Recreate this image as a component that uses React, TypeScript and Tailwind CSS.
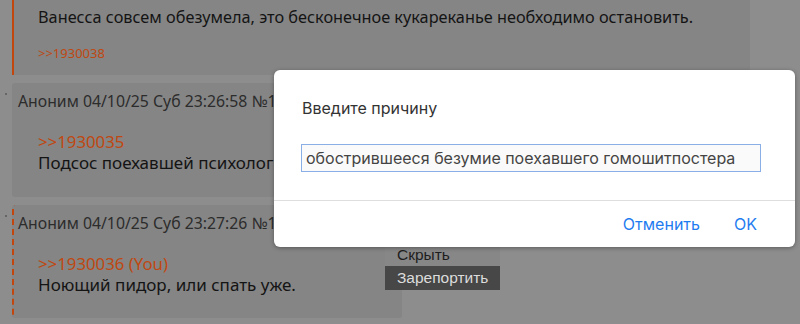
import React from 'react';

const Post: React.FC<{
  header: string;
  link: string;
  body: string;
  dashed?: boolean;
  className?: string;
}> = ({ header, link, body, dashed, className }) => {
  return (
    <div className="flex">
      <div className="w-[12px] pt-[10px] flex justify-center gap-[3px]">
        <span className="w-[2px] h-[2px] bg-[#5a5a5a] rounded-full" />
      </div>
      <div
        className={`bg-[#858585] rounded-[3px] border-l-2 pl-[4px] pb-[14px] overflow-hidden ${
          dashed ? 'border-dashed border-[#c2470f]' : 'border-transparent'
        } ${className ?? ''}`}
      >
        <div className="text-[15.8px] leading-[20px] text-[#2c2c2c] pt-[8px] whitespace-nowrap">
          {header}
        </div>
        <div className="pl-[20px] pt-[20px]">
          <div className="text-[16.8px] leading-[21px] text-[#bf4812]">{link}</div>
          <div className="text-[17px] leading-[22px] text-[#141414] whitespace-nowrap">{body}</div>
        </div>
      </div>
    </div>
  );
};

export default function App() {
  return (
    <div
      className="relative w-[800px] h-[324px] overflow-hidden bg-[#8d8d8d]"
      style={{ fontFamily: '"Noto Sans", "DejaVu Sans", sans-serif' }}
    >
      <div className="flex flex-col gap-[8px]">
        {/* reply being reported */}
        <div className="ml-[12px] w-[738px] h-[75px] bg-[#858585] border-l-2 border-[#c2470f] pl-[24px] pt-[5px]">
          <div className="text-[16.3px] leading-[24px] text-[#141414] whitespace-nowrap">
            Ванесса совсем обезумела, это бесконечное кукареканье необходимо остановить.
          </div>
          <div className="text-[13px] leading-[18px] text-[#bf4812] mt-[15px]">&gt;&gt;1930038</div>
        </div>

        <Post
          header="Аноним 04/10/25 Суб 23:26:58 №1930036"
          link=">>1930035"
          body="Подсос поехавшей психологической помощи."
          className="w-[390px] h-[114px]"
        />

        <Post
          header="Аноним 04/10/25 Суб 23:27:26 №1930039"
          link=">>1930036 (You)"
          body="Ноющий пидор, или спать уже."
          dashed
          className="w-[390px] h-[113px]"
        />
      </div>

      {/* post menu */}
      <div
        className="absolute left-[385px] top-[200px] w-[115px] bg-[#878787] text-[15.5px]"
        style={{ fontFamily: '"Liberation Sans", Arial, sans-serif' }}
      >
        <div className="h-[21px] leading-[21px] pl-[12px] text-[#1e1e1e]">Пожаловаться</div>
        <div className="h-[22px] leading-[22px] pl-[12px] text-[#1e1e1e]">Ответить</div>
        <div className="h-[23px] leading-[23px] pl-[12px] text-[#1e1e1e]">Скрыть</div>
        <div className="h-[24px] leading-[24px] pl-[12px] bg-[#474747] text-[#dcdcdc]">Зарепортить</div>
      </div>

      {/* prompt dialog */}
      <div
        className="absolute left-[274px] top-[70px] w-[521px] h-[177px] bg-white rounded-[6px] shadow-[0_1px_4px_rgba(0,0,0,0.35)] flex flex-col"
        style={{ fontFamily: 'Inter, "Liberation Sans", sans-serif' }}
      >
        <div className="px-[28px] pt-[28px] flex flex-col gap-[26px]">
          <div className="text-[16px] leading-[20px] text-[#333]">Введите причину</div>
          <div className="ml-[-1px] w-[460px] h-[28px] border border-[#8aaee6] bg-[#fafafa] pl-[4px] flex items-center text-[16px] text-[#444] whitespace-nowrap overflow-hidden">
            обострившееся безумие поехавшего гомошитпостера
          </div>
        </div>
        <div className="mt-auto border-t border-[#dedede] h-[47px] flex items-center justify-end gap-[34px] pr-[38px] text-[16px] text-[#1f7cf0]">
          <span>Отменить</span>
          <span>OK</span>
        </div>
      </div>
    </div>
  );
}
